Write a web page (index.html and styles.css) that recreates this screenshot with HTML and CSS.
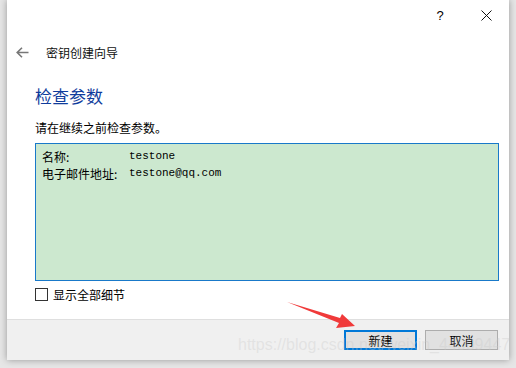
FILE: index.html
```html
<!DOCTYPE html>
<html lang="zh">
<head>
  <meta charset="UTF-8" />
  <title>密钥创建向导</title>
  <link rel="stylesheet" href="styles.css">
</head>
<body>
  <div class="window">
    <div class="titlebar">
      <span class="tb-btn help">?</span>
      <span class="tb-btn close">
        <svg width="11" height="11" viewBox="0 0 11 11"><path d="M0.5 0.5 L10.5 10.5 M10.5 0.5 L0.5 10.5" stroke="#111" stroke-width="1" fill="none"/></svg>
      </span>
    </div>
    <div class="navbar">
      <svg class="back" width="13" height="11" viewBox="0 0 13 11"><path d="M6 0.7 L1.2 5.5 L6 10.3 M1.2 5.5 L12.5 5.5" stroke="#777" stroke-width="1.6" fill="none"/></svg>
      <span class="wiz-title">密钥创建向导</span>
    </div>
    <main class="page">
      <h1>检查参数</h1>
      <p class="desc">请在继续之前检查参数。</p>
      <div class="summary">
        <div class="row"><span class="key">名称:</span><span class="val">testone</span></div>
        <div class="row"><span class="key">电子邮件地址:</span><span class="val">testone@qq.com</span></div>
      </div>
      <label class="check"><span class="box"></span>显示全部细节</label>
    </main>
    <footer>
      <button class="btn primary">新建</button>
      <button class="btn">取消</button>
    </footer>
  </div>

  <svg class="arrow" width="80" height="40" viewBox="0 0 80 40">
    <polygon points="0,2 53,18 55,14 68,26 49,28 52,23" fill="#f03a3a"/>
  </svg>
  <div class="watermark">https://blog.csdn.net/weixin_44009447</div>
</body>
</html>
```

FILE: styles.css
```css
* {
  margin: 0;
  padding: 0;
  box-sizing: border-box;
}
body {
  background: #e6e6e6;
  font-family: "Noto Sans CJK SC", "Liberation Sans", sans-serif;
  font-size: 12px;
  color: #000;
  width: 516px;
  height: 368px;
  overflow: hidden;
  position: relative;
}
.window {
  margin-left: 7px;
  width: 502px;
  height: 360px;
  background: #fff;
  display: flex;
  flex-direction: column;
  box-shadow: 0 0 7px rgba(0, 0, 0, 0.35);
}
.titlebar {
  height: 32px;
  display: flex;
  justify-content: flex-end;
}
.tb-btn {
  width: 46px;
  height: 32px;
  display: flex;
  align-items: center;
  justify-content: center;
}
.help {
  font-family: "Liberation Sans", sans-serif;
  font-size: 13px;
  padding-bottom: 2px;
}
.close svg {
  margin-bottom: 2px;
}
.navbar {
  height: 42px;
  display: flex;
  align-items: center;
  padding-left: 9px;
  padding-bottom: 2px;
}
.back {
  margin-right: 17px;
}
.wiz-title {
  font-size: 12px;
  color: #111;
}
.page {
  flex: 1;
  padding: 10px 10px 0 28px;
}
h1 {
  font-size: 17px;
  font-weight: normal;
  color: #0f3c9c;
  line-height: 24px;
}
.desc {
  margin-top: 11px;
  line-height: 18px;
}
.summary {
  margin-top: 6px;
  height: 138px;
  background: #cce8cf;
  border: 1px solid #1979c9;
  padding: 4px 6px;
}
.row {
  display: flex;
  line-height: 17px;
}
.key {
  width: 87px;
  font-size: 12px;
}
.val {
  font-family: "Liberation Mono", monospace;
  font-size: 11px;
}
.check {
  display: flex;
  align-items: center;
  gap: 5px;
  margin-top: 5px;
  font-size: 12px;
}
.box {
  width: 13px;
  height: 13px;
  border: 1px solid #333;
  background: #fff;
}
footer {
  height: 41px;
  background: #f0f0f0;
  border-top: 1px solid #dfdfdf;
  display: flex;
  justify-content: flex-end;
  align-items: flex-start;
  gap: 8px;
  padding: 10px 11px 0 0;
}
.btn {
  width: 73px;
  height: 20px;
  background: #e1e1e1;
  border: 1px solid #adadad;
  font-family: "Noto Sans CJK SC", sans-serif;
  font-size: 12px;
  color: #000;
}
.btn.primary {
  border: 2px solid #0078d7;
}
.arrow {
  position: absolute;
  left: 287px;
  top: 300px;
}
.watermark {
  position: absolute;
  left: 238px;
  top: 336px;
  font-family: "Liberation Sans", sans-serif;
  font-size: 16px;
  color: rgba(200, 200, 200, 0.35);
  pointer-events: none;
}
```
